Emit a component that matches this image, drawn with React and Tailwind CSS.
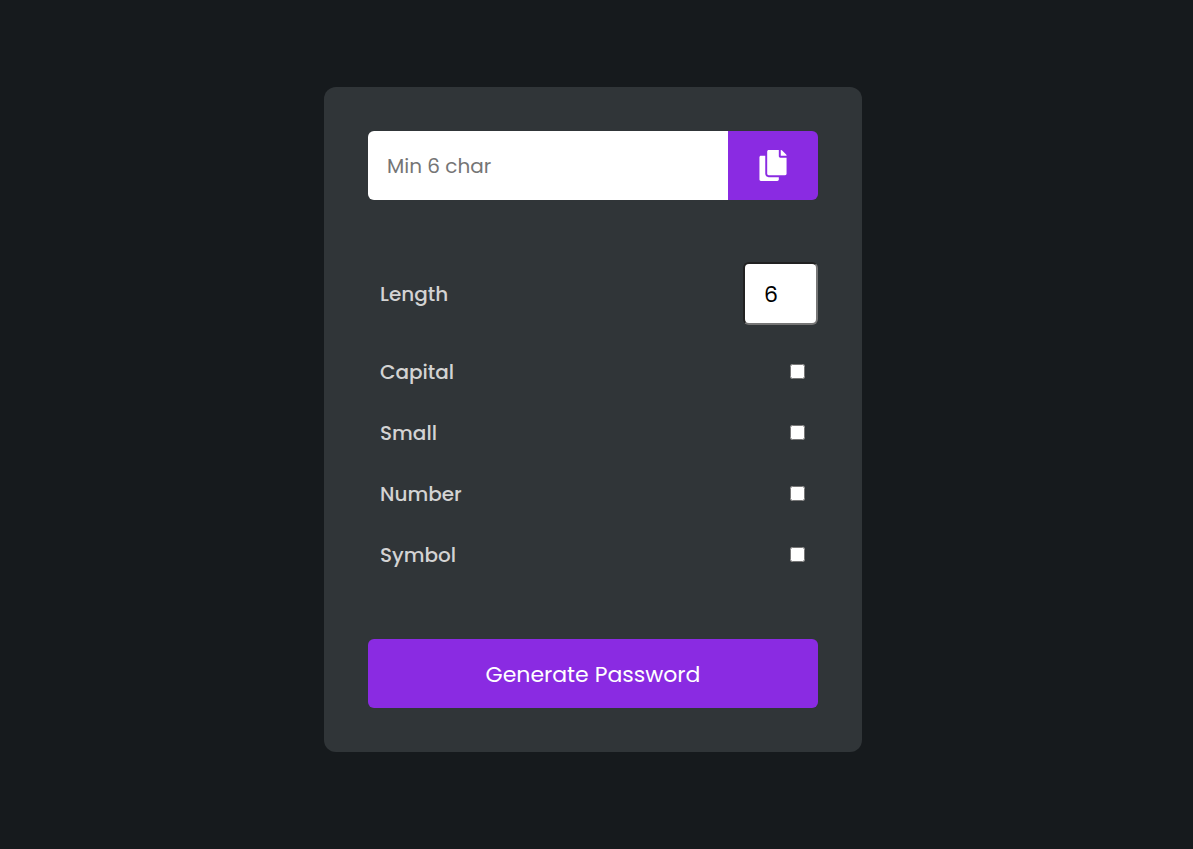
import { useState } from "react";
import { FaCopy } from "react-icons/fa";

const OPTIONS = ["Capital", "Small", "Number", "Symbol"];

function OptionRow({ name }) {
  const id = name.toLowerCase();
  return (
    <div className="flex h-[61px] items-center justify-between px-3">
      <label htmlFor={id} className="text-[20px] leading-[30px] font-medium text-[#d3d3d3]">
        {name}
      </label>
      <input id={id} type="checkbox" className="mr-px size-[15px]" />
    </div>
  );
}

export default function App() {
  const [length, setLength] = useState(6);
  return (
    <main className="flex min-h-screen items-center justify-center bg-[#161a1d] pr-[7px] pb-[10px] font-['Poppins','Inter',sans-serif]">
      <form
        className="w-full max-w-[538px] rounded-xl bg-[#303538] p-11"
        onSubmit={(e) => e.preventDefault()}
      >
        <div className="flex h-[69px] overflow-hidden rounded-md">
          <input
            type="text"
            aria-label="Password"
            placeholder="Min 6 char"
            className="min-w-0 flex-1 bg-white px-[19px] text-[20px] text-black placeholder:text-[#757575]"
          />
          <button
            type="button"
            aria-label="Copy password"
            className="flex w-[90px] items-center justify-center bg-[#8a2be2] text-white"
          >
            <FaCopy className="h-[31px] w-7" aria-hidden="true" />
          </button>
        </div>

        <div className="mt-[62px] flex items-center justify-between pl-3">
          <label htmlFor="length" className="text-[20px] leading-[30px] font-medium text-[#d3d3d3]">
            Length
          </label>
          <input
            id="length"
            type="number"
            value={length}
            onChange={(e) => setLength(e.target.value)}
            className="h-[63px] w-[75px] rounded-md border-2 border-[#767676] border-t-[#212121] border-l-[#212121] bg-white pt-px pl-[19px] text-[22px] text-black"
          />
        </div>

        <div className="mt-4">
          {OPTIONS.map((name) => (
            <OptionRow key={name} name={name} />
          ))}
        </div>

        <button
          type="submit"
          className="mt-[54px] h-[69px] w-full rounded-md bg-[#8a2be2] pt-px text-[22px] text-white"
        >
          Generate Password
        </button>
      </form>
    </main>
  );
}
